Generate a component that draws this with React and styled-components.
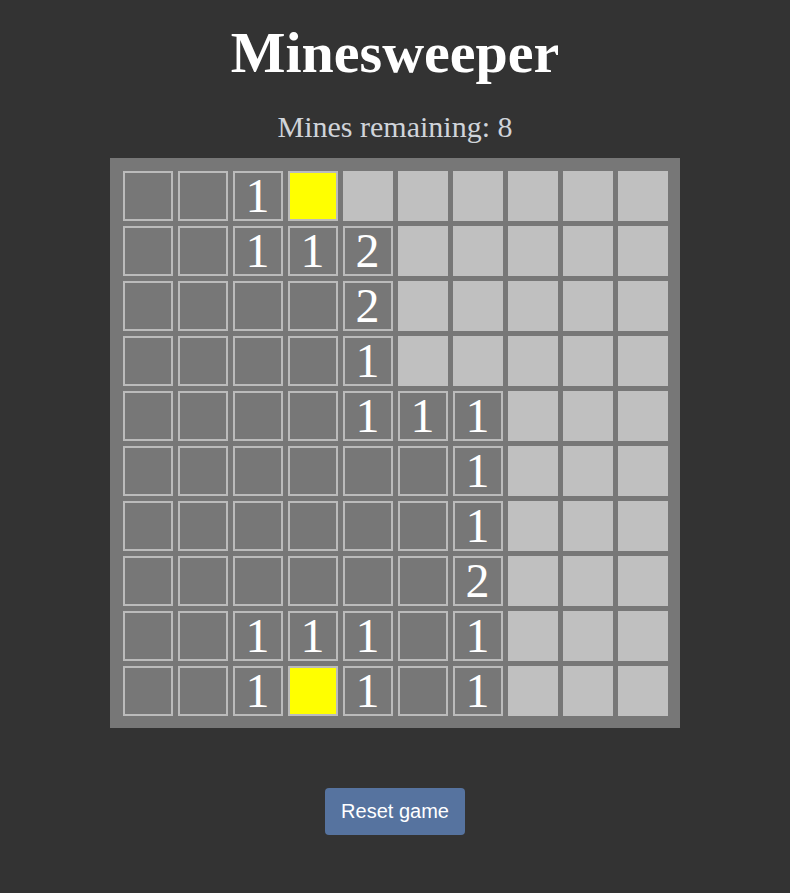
import React from "react";
import styled, { createGlobalStyle } from "styled-components";

const Global = createGlobalStyle`
  html, body { margin: 0; padding: 0; background: #333333; }
  body { font-family: "Liberation Serif", "Times New Roman", serif; }
`;

const Page = styled.div`
  display: flex;
  flex-direction: column;
  align-items: center;
  padding-top: 20px;
  min-height: 893px;
  box-sizing: border-box;
`;

const Title = styled.h1`
  margin: 0;
  font-family: "Liberation Serif", serif;
  font-weight: bold;
  font-size: 58px;
  line-height: 65px;
  color: #ffffff;
`;

const Status = styled.p`
  margin: 25px 0 0;
  font-family: "Liberation Serif", serif;
  font-size: 30px;
  line-height: 33px;
  color: #d0d4da;
`;

const Board = styled.div`
  margin-top: 15px;
  display: grid;
  grid-template-columns: repeat(10, 50px);
  gap: 5px;
  padding: 12.5px;
  background: #777777;
`;

const Cell = styled.div`
  box-sizing: border-box;
  width: 50px;
  height: 50px;
  display: flex;
  align-items: center;
  justify-content: center;
  font-family: "Liberation Serif", serif;
  font-size: 48px;
  line-height: 46px;
  color: #ffffff;
  background: ${(p) =>
    p.$kind === "hidden" ? "#c0c0c0" : p.$kind === "flag" ? "#ffff00" : "#777777"};
  border: 2px solid ${(p) => (p.$kind === "hidden" ? "#c0c0c0" : "#bbbbbb")};
`;

const ResetButton = styled.button`
  margin-top: 60px;
  box-sizing: border-box;
  height: 47px;
  padding: 0 16px;
  border: none;
  border-radius: 4px;
  background: #56739f;
  color: #ffffff;
  font-family: "Liberation Sans", Arial, sans-serif;
  font-size: 20px;
  line-height: 23px;
  cursor: pointer;
`;

const rows = [
  "..1F......",
  "..112.....",
  "....2.....",
  "....1.....",
  "....111...",
  "......1...",
  "......1...",
  "......2...",
  "..111.1...",
  "..1F1.1...",
];
// number of revealed cells at the start of each row (the rest are hidden)
const revealedUpTo = [4, 5, 5, 5, 7, 7, 7, 7, 7, 7];

export default function App() {
  return (
    <>
      <Global />
      <Page>
        <Title>Minesweeper</Title>
        <Status>Mines remaining: 8</Status>
        <Board>
          {rows.map((row, r) =>
            row.split("").map((ch, c) => {
              let kind = "open";
              if (ch === "F") kind = "flag";
              else if (c >= revealedUpTo[r]) kind = "hidden";
              return (
                <Cell key={`${r}-${c}`} $kind={kind}>
                  {/[1-8]/.test(ch) ? ch : ""}
                </Cell>
              );
            })
          )}
        </Board>
        <ResetButton>Reset game</ResetButton>
      </Page>
    </>
  );
}
